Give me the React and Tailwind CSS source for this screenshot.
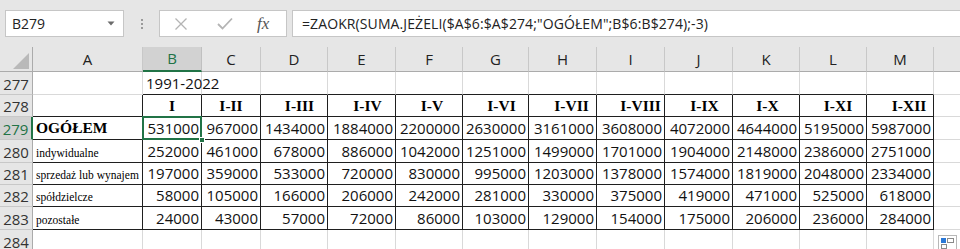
import React from "react";

const COLS = ["A", "B", "C", "D", "E", "F", "G", "H", "I", "J", "K", "L", "M"];

const HEADERS = [
  { t: "I", pad: "pl-0" },
  { t: "I-II", pad: "pl-0" },
  { t: "I-III", pad: "pl-[11px]" },
  { t: "I-IV", pad: "pl-[12px]" },
  { t: "I-V", pad: "pl-[6px]" },
  { t: "I-VI", pad: "pl-[12px]" },
  { t: "I-VII", pad: "pl-[18px]" },
  { t: "I-VIII", pad: "pl-[20px]" },
  { t: "I-IX", pad: "pl-[12px]" },
  { t: "I-X", pad: "pl-[3px]" },
  { t: "I-XI", pad: "pl-[10px]" },
  { t: "I-XII", pad: "pl-[18px]" },
];

const DATA = [
  { label: "OGÓŁEM", bold: true, values: [531000, 967000, 1434000, 1884000, 2200000, 2630000, 3161000, 3608000, 4072000, 4644000, 5195000, 5987000] },
  { label: "indywidualne", values: [252000, 461000, 678000, 886000, 1042000, 1251000, 1499000, 1701000, 1904000, 2148000, 2386000, 2751000] },
  { label: "sprzedaż lub wynajem", values: [197000, 359000, 533000, 720000, 830000, 995000, 1203000, 1378000, 1574000, 1819000, 2048000, 2334000] },
  { label: "spółdzielcze", values: [58000, 105000, 166000, 206000, 242000, 281000, 330000, 375000, 419000, 471000, 525000, 618000] },
  { label: "pozostałe", values: [24000, 43000, 57000, 72000, 86000, 103000, 129000, 154000, 175000, 206000, 236000, 284000] },
];

const ROW_H = {
  277: "h-[23px]",
  278: "h-[22px]",
  279: "h-[23px]",
  280: "h-[23px]",
  281: "h-[22px]",
  282: "h-[22px]",
  283: "h-[23px]",
  284: "h-[23px]",
};

// col index: 0 = A ... 12 = M, 13 = filler
const cellBorders = (row, col) => {
  const inTable = col <= 12;
  const darkRight = inTable && row >= 278 && row <= 283;
  const darkBottom =
    (row === 277 && col >= 1 && col <= 12) ||
    (row >= 278 && row <= 283 && inTable);
  return [
    "border-r border-b",
    darkRight ? "border-r-[#1f1f1f]" : "border-r-[#d9d9d9]",
    darkBottom ? "border-b-[#1f1f1f]" : "border-b-[#d9d9d9]",
  ].join(" ");
};

const RowHeader = ({ n, active }) => (
  <div
    className={`${ROW_H[n]} flex items-end justify-center pb-[1px] text-[15px] leading-[18px] border-b border-b-[#c8c8c8] ${
      active
        ? "bg-[#d2d2d2] text-[#217346] border-r-2 border-r-[#217346]"
        : "bg-[#e6e6e6] text-[#333] border-r border-r-[#ababab]"
    }`}
  >
    {n}
  </div>
);

const Cell = ({ row, col, className = "", children }) => (
  <div className={`${ROW_H[row]} bg-white ${cellBorders(row, col)} ${className}`}>
    {children}
  </div>
);

const FormulaBar = () => (
  <div className="h-[47px] flex items-start pt-[10px] pl-[5px] gap-0">
    <div className="w-[119px] h-[27px] bg-white border border-[#c6c6c6] flex items-center justify-between pl-[6px] pr-[8px] text-[14px] text-[#222]">
      <span>B279</span>
      <svg width="8" height="5" viewBox="0 0 8 5">
        <path d="M0.5 0.5 L7.5 0.5 L4 4.5 Z" fill="#6b6b6b" />
      </svg>
    </div>
    <div className="w-[35px] h-[27px] flex flex-col items-center justify-center gap-[2px]">
      <span className="w-[2px] h-[2px] bg-[#9a9a9a]" />
      <span className="w-[2px] h-[2px] bg-[#9a9a9a]" />
      <span className="w-[2px] h-[2px] bg-[#9a9a9a]" />
    </div>
    <div className="w-[128px] h-[27px] bg-white border border-[#c6c6c6] flex items-center">
      <svg className="ml-[14px]" width="14" height="14" viewBox="0 0 14 14">
        <path d="M1.5 1.5 L12.5 12.5 M12.5 1.5 L1.5 12.5" stroke="#b4b4b4" strokeWidth="1.3" fill="none" />
      </svg>
      <svg className="ml-[29px]" width="16" height="13" viewBox="0 0 16 13">
        <path d="M1 7 L5.5 11.5 L15 1.5" stroke="#b4b4b4" strokeWidth="1.8" fill="none" />
      </svg>
      <span
        className="ml-[24px] text-[17px] italic text-[#555] leading-none"
        style={{ fontFamily: '"Liberation Serif", serif' }}
      >
        fx
      </span>
    </div>
    <div className="ml-[5px] flex-1 h-[27px] bg-white border border-[#c6c6c6] border-r-0 flex items-center pl-[9px] text-[14px] text-[#222] tracking-[0.1px]">
      =ZAOKR(SUMA.JEŻELI($A$6:$A$274;"OGÓŁEM";B$6:B$274);-3)
    </div>
  </div>
);

export default function App() {
  const rows = [277, 278, 279, 280, 281, 282, 283, 284];
  return (
    <div
      className="relative w-[960px] h-[249px] overflow-hidden bg-[#e6e6e6] text-[#111]"
      style={{ fontFamily: '"Open Sans", "Noto Sans", sans-serif' }}
    >
      <FormulaBar />

      <div className="grid grid-cols-[33px_110px_59px_59px_67px_68px_67px_66px_68px_68px_68px_67px_67px_67px_1fr]">
        {/* column headers */}
        <div className="h-[25px] bg-[#e6e6e6] border-r border-r-[#ababab] border-b border-b-[#ababab] flex items-end justify-end pr-[3px] pb-[2px]">
          <svg width="16" height="16" viewBox="0 0 16 16">
            <path d="M16 0 L16 16 L0 16 Z" fill="#b9b9b9" />
          </svg>
        </div>
        {COLS.map((c) =>
          c === "B" ? (
            <div
              key={c}
              className="h-[25px] bg-[#d2d2d2] border-r border-r-[#c0c0c0] border-b-2 border-b-[#217346] flex items-center justify-center text-[15px] text-[#217346]"
            >
              {c}
            </div>
          ) : (
            <div
              key={c}
              className="h-[25px] bg-[#e6e6e6] border-r border-r-[#c8c8c8] border-b border-b-[#ababab] flex items-center justify-center text-[15px] text-[#222]"
            >
              {c}
            </div>
          )
        )}
        <div className="h-[25px] bg-[#e6e6e6] border-b border-b-[#ababab]" />

        {rows.map((r) => {
          const dataRow = r >= 279 && r <= 283 ? DATA[r - 279] : null;
          return (
            <React.Fragment key={r}>
              <RowHeader n={r} active={r === 279} />
              {/* column A */}
              <Cell row={r} col={0} className="flex items-end pl-[3px] pb-[1px]">
                {dataRow && (
                  <span
                    className={
                      dataRow.bold
                        ? "text-[15.5px] font-bold leading-[20px] text-black"
                        : "text-[11.5px] leading-[15px] text-black"
                    }
                    style={{ fontFamily: '"Liberation Serif", "Times New Roman", serif' }}
                  >
                    {dataRow.label}
                  </span>
                )}
              </Cell>
              {/* B..M */}
              {COLS.slice(1).map((c, i) => {
                const col = i + 1;
                if (r === 277) {
                  return (
                    <Cell key={c} row={r} col={col} className="relative">
                      {col === 1 && (
                        <span className="absolute z-10 left-[3px] bottom-[1px] whitespace-nowrap text-[15px] leading-[20px]">
                          1991-2022
                        </span>
                      )}
                    </Cell>
                  );
                }
                if (r === 278) {
                  return (
                    <Cell
                      key={c}
                      row={r}
                      col={col}
                      className={`flex items-end justify-center pb-[1px] ${HEADERS[i].pad}`}
                    >
                      <span
                        className="text-[15.5px] font-bold leading-[19px] text-black"
                        style={{ fontFamily: '"Liberation Serif", "Times New Roman", serif' }}
                      >
                        {HEADERS[i].t}
                      </span>
                    </Cell>
                  );
                }
                if (dataRow) {
                  const active = r === 279 && col === 1;
                  return (
                    <Cell
                      key={c}
                      row={r}
                      col={col}
                      className="relative flex items-end justify-end pr-[2px] pb-[1px] text-[15px] leading-[20px]"
                    >
                      {dataRow.values[i]}
                      {active && (
                        <>
                          <div className="absolute z-10 -left-px -top-px -right-px -bottom-px border-2 border-[#217346]" />
                          <div className="absolute z-10 -right-[4px] -bottom-[4px] w-[6px] h-[6px] bg-[#217346] border border-white" />
                        </>
                      )}
                    </Cell>
                  );
                }
                return <Cell key={c} row={r} col={col} />;
              })}
              <Cell row={r} col={13} className="border-r-0" />
            </React.Fragment>
          );
        })}
      </div>

      {/* quick analysis icon */}
      <div className="absolute left-[938px] top-[235px] w-[19px] h-[16px] bg-white border border-[#b8b8b8] p-[2px]">
        <div className="flex gap-[1px]">
          <div className="w-[6px] h-[5px] bg-[#2b78d6]" />
          <div className="w-[7px] h-[5px] border border-[#8a8a8a]" />
        </div>
        <div className="flex gap-[1px] mt-[1px]">
          <div className="w-[6px] h-[5px] border border-[#8a8a8a]" />
        </div>
      </div>
    </div>
  );
}
